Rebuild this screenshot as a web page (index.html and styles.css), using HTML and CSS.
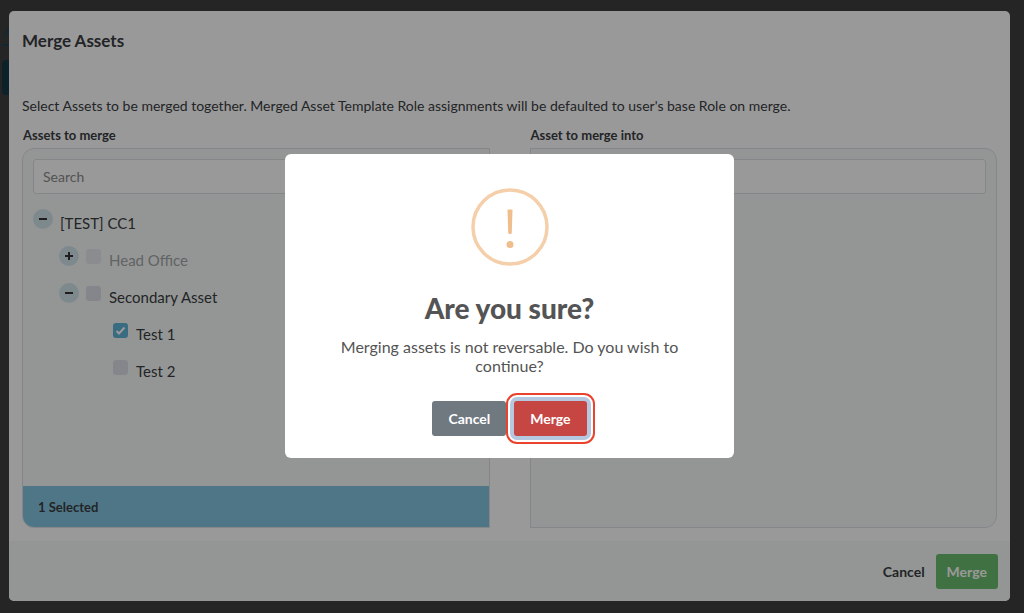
FILE: index.html
```html
<!DOCTYPE html>
<html lang="en">
<head>
  <meta charset="UTF-8">
  <title>Merge Assets</title>
  <link rel="stylesheet" href="styles.css">
</head>
<body>
  <div class="page">
    <a class="page-tab" href="#">A</a>
    <button class="page-button" type="button" aria-label="Add asset"></button>
  </div>

  <div class="modal">
    <h1>Merge Assets</h1>
    <div class="modal-body">
      <p class="description">Select Assets to be merged together. Merged Asset Template Role assignments will be defaulted to user's base Role on merge.</p>
      <div class="columns">
        <section class="column">
          <h2>Assets to merge</h2>
          <div class="panel panel-left">
            <input class="search" type="text" placeholder="Search" aria-label="Search assets to merge">
            <ul class="tree">
              <li class="row">
                <button class="toggle" type="button" aria-label="Collapse"><svg width="10" height="10" viewBox="0 0 10 10"><path d="M1 5h8"/></svg></button>
                <span class="name">[TEST] CC1</span>
              </li>
              <li class="row level-1">
                <button class="toggle" type="button" aria-label="Expand"><svg width="10" height="10" viewBox="0 0 10 10"><path d="M1 5h8M5 1v8"/></svg></button>
                <input type="checkbox" id="head" disabled>
                <label class="name" for="head">Head Office</label>
              </li>
              <li class="row level-1">
                <button class="toggle" type="button" aria-label="Collapse"><svg width="10" height="10" viewBox="0 0 10 10"><path d="M1 5h8"/></svg></button>
                <input type="checkbox" id="secondary">
                <label class="name" for="secondary">Secondary Asset</label>
              </li>
              <li class="row level-2">
                <span class="check">
                  <input type="checkbox" id="test1" checked>
                  <svg width="15" height="15" viewBox="0 0 15 15"><path d="M3.5 8l2.5 2.5 5.5-6"/></svg>
                </span>
                <label class="name" for="test1">Test 1</label>
              </li>
              <li class="row level-2">
                <input type="checkbox" id="test2">
                <label class="name" for="test2">Test 2</label>
              </li>
            </ul>
            <div class="selected">1 Selected</div>
          </div>
        </section>
        <section class="column">
          <h2>Asset to merge into</h2>
          <div class="panel panel-right">
            <input class="search" type="text" aria-label="Search asset to merge into">
          </div>
        </section>
      </div>
    </div>
    <div class="modal-footer">
      <button class="btn btn-link" type="button">Cancel</button>
      <button class="btn btn-green" type="button">Merge</button>
    </div>
  </div>

  <div class="overlay">
    <div class="dialog" role="alertdialog" aria-labelledby="confirm-title" aria-describedby="confirm-text">
      <svg class="warning" width="78" height="78" viewBox="0 0 78 78">
        <circle cx="39" cy="39" r="37" fill="none" stroke="#f4cfaa" stroke-width="3.5"/>
        <path d="M36.5 21.5h5l-.7 23q-.1 1.8-1.8 1.8t-1.8-1.8z" fill="#f0bd8c"/>
        <circle cx="39" cy="56.5" r="3.5" fill="#f0bd8c"/>
      </svg>
      <h2 class="dialog-title" id="confirm-title">Are you sure?</h2>
      <p class="dialog-text" id="confirm-text">Merging assets is not reversable. Do you wish to continue?</p>
      <div class="dialog-actions">
        <button class="btn btn-gray" type="button">Cancel</button>
        <button class="btn btn-red" type="button">Merge</button>
      </div>
    </div>
  </div>
</body>
</html>
```
FILE: styles.css
```css
* {
  box-sizing: border-box;
}
body {
  margin: 0;
  min-height: 100vh;
  display: flex;
  background: #3e3e3e;
  color: #3a3d42;
  font-family: Lato, "Liberation Sans", sans-serif;
  font-size: 14px;
}
h1, h2, p, ul {
  margin: 0;
  padding: 0;
}
button, input {
  font: inherit;
}

/* page behind the modal */
.page {
  position: absolute;
  top: 24px;
  left: 2px;
}
.page-tab {
  display: block;
  width: 10px;
  height: 22px;
  border-bottom: 2px solid #1d4455;
  color: #1d4455;
  text-decoration: none;
}
.page-button {
  display: block;
  width: 60px;
  height: 35px;
  margin-top: 14px;
  border: none;
  border-radius: 4px;
  background: #173746;
}

.modal {
  position: relative;
  flex: 1;
  display: flex;
  flex-direction: column;
  margin: 11px 14px 12px 9px;
  border-radius: 5px;
  background: #fff;
  overflow: hidden;
}
h1 {
  padding: 20px 13px;
  font-size: 17px;
  line-height: 20px;
}
.modal-body {
  flex: 1;
  display: flex;
  flex-direction: column;
  padding: 25px 13px 13px;
}
.description {
  line-height: 20px;
}
.columns {
  flex: 1;
  display: grid;
  grid-template-columns: 1fr 1fr;
  gap: 40px;
  margin-top: 10px;
}
.column {
  display: flex;
  flex-direction: column;
}
.column h2 {
  padding-left: 1px;
  margin-bottom: 4px;
  font-size: 13px;
  line-height: 18px;
}
.panel {
  flex: 1;
  display: flex;
  flex-direction: column;
  border: 1px solid #dcdfe6;
  background: #f7fbf9;
  overflow: hidden;
}
.panel-left {
  border-radius: 12px 0 0 12px;
}
.panel-right {
  border-radius: 0 12px 12px 0;
}
.search {
  height: 35px;
  margin: 10px 10px 0;
  padding: 0 9px;
  border: 1px solid #dcdfe6;
  border-radius: 3px;
  background: #fff;
}
.search::placeholder {
  color: #8b8b8b;
}

.tree {
  flex: 1;
  padding: 15px 10px;
  list-style: none;
}
.row {
  display: flex;
  align-items: flex-start;
  height: 37px;
}
.level-1 {
  padding-left: 26px;
}
.level-2 {
  padding-left: 80px;
}
.toggle {
  display: flex;
  align-items: center;
  justify-content: center;
  width: 20px;
  height: 20px;
  margin-right: 7px;
  padding: 0;
  border: none;
  border-radius: 50%;
  background: #d1e4ec;
}
.toggle path {
  fill: none;
  stroke: #333;
  stroke-width: 2;
}
.name {
  padding-top: 4px;
  font-size: 15px;
  line-height: 20px;
}
input[type="checkbox"] {
  appearance: none;
  width: 15px;
  height: 15px;
  margin: 3px 8px 0 0;
  border-radius: 3px;
  background: #dddfe8;
}
input[type="checkbox"]:checked {
  background: #5fb4d6;
}
input[type="checkbox"]:disabled {
  background: #e8eaf0;
}
input:disabled + .name {
  color: #a2a5a7;
}
.check {
  display: grid;
}
.check input, .check svg {
  grid-area: 1 / 1;
}
.check svg {
  margin-top: 3px;
  pointer-events: none;
}
.check path {
  fill: none;
  stroke: #fff;
  stroke-width: 2;
}
.selected {
  padding: 11px 15px 10px;
  background: #84c5df;
  font-size: 13px;
  font-weight: bold;
  line-height: 20px;
}

.modal-footer {
  display: flex;
  justify-content: flex-end;
  padding: 13px 12px 12px;
  background: #f7fbf9;
}
.btn {
  height: 35px;
  padding: 0 11px;
  border: none;
  border-radius: 3px;
  color: #fff;
  font-weight: bold;
}
.btn-link {
  background: none;
  color: #3a3d42;
}
.btn-green {
  background: #6cbc6e;
}

.overlay {
  position: fixed;
  inset: 0;
  display: flex;
  align-items: center;
  justify-content: center;
  padding: 0 5px 2px 0;
  background: rgba(0, 0, 0, 0.4);
}
.dialog {
  display: flex;
  flex-direction: column;
  align-items: center;
  width: 449px;
  max-width: 100%;
  padding: 34px 40px 22px;
  border-radius: 6px;
  background: #fff;
  text-align: center;
}
.dialog-title {
  margin-top: 24px;
  color: #545454;
  font-size: 28px;
  font-weight: 900;
  line-height: 36px;
}
.dialog-text {
  margin-top: 11px;
  color: #545454;
  font-size: 16px;
  line-height: 19px;
}
.dialog-actions {
  display: flex;
  gap: 8px;
  margin-top: 26px;
}
.dialog .btn {
  padding: 0 16px;
}
.btn-gray {
  background: #707980;
}
.dialog .btn-red {
  background: #c54642;
  box-shadow: 0 0 0 4px #b6c7e0;
  outline: 2px solid #e9432d;
  outline-offset: 6px;
}
```
